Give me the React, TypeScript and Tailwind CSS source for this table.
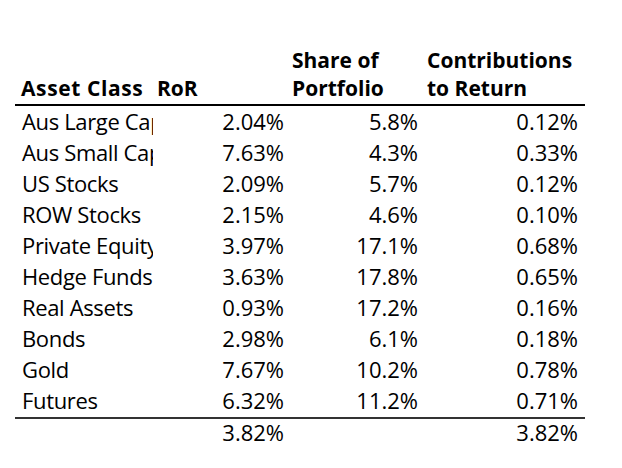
import React from "react";

const rows: [string, string, string, string][] = [
  ["Aus Large Cap", "2.04%", "5.8%", "0.12%"],
  ["Aus Small Cap", "7.63%", "4.3%", "0.33%"],
  ["US Stocks", "2.09%", "5.7%", "0.12%"],
  ["ROW Stocks", "2.15%", "4.6%", "0.10%"],
  ["Private Equity", "3.97%", "17.1%", "0.68%"],
  ["Hedge Funds", "3.63%", "17.8%", "0.65%"],
  ["Real Assets", "0.93%", "17.2%", "0.16%"],
  ["Bonds", "2.98%", "6.1%", "0.18%"],
  ["Gold", "7.67%", "10.2%", "0.78%"],
  ["Futures", "6.32%", "11.2%", "0.71%"],
];

export default function App() {
  return (
    <div
      className="w-[622px] h-[468px] bg-white text-black overflow-hidden"
      style={{ fontFamily: "'Open Sans', 'Liberation Sans', sans-serif" }}
    >
      <div className="ml-[15px] w-[570px] text-[22px]">
        <div className="grid grid-cols-[138px_136px_135px_161px] h-[106px] items-end font-bold text-[21px] leading-[28px] pb-[2px] border-b-2 border-black">
          <div className="pl-[6px] whitespace-nowrap tracking-[0.6px]">Asset Class</div>
          <div className="pl-[4px]">RoR</div>
          <div className="pl-[3px]">
            <div>Share of</div>
            <div>Portfolio</div>
          </div>
          <div className="pl-[3px] whitespace-nowrap">
            <div>Contributions</div>
            <div>to Return</div>
          </div>
        </div>
        <div className="border-b-2 border-[#333]">
          {rows.map((r) => (
            <div key={r[0]} className="grid grid-cols-[138px_136px_135px_161px] h-[31.1px] items-start pt-[0.5px] leading-[28px]">
              <div className="pl-[7px] pr-[1px] overflow-hidden whitespace-nowrap tracking-[-0.35px]">{r[0]}</div>
              <div className="text-right pr-[5px]">{r[1]}</div>
              <div className="text-right pr-[6px]">{r[2]}</div>
              <div className="text-right pr-[7px]">{r[3]}</div>
            </div>
          ))}
        </div>
        <div className="grid grid-cols-[138px_136px_135px_161px] h-[31.1px] items-start leading-[26px]">
          <div></div>
          <div className="text-right pr-[5px]">3.82%</div>
          <div></div>
          <div className="text-right pr-[7px]">3.82%</div>
        </div>
      </div>
    </div>
  );
}
